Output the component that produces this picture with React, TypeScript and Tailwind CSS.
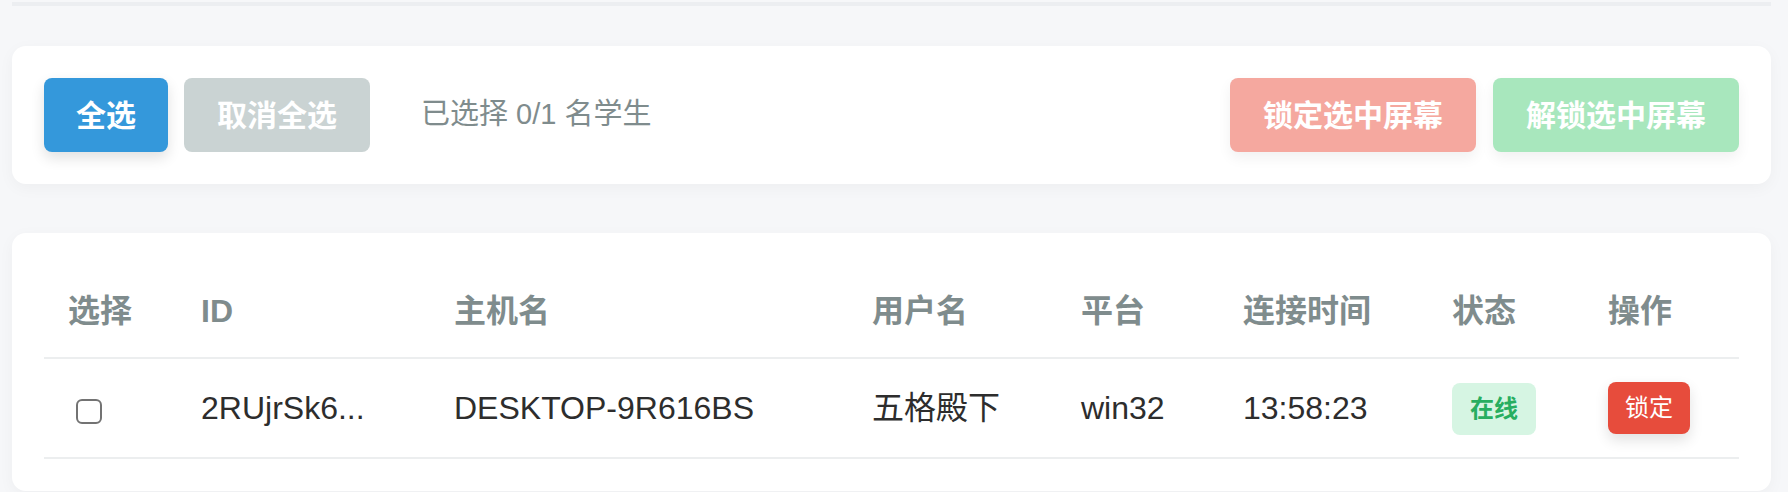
import React from "react";

const font = "font-['Liberation_Sans','Noto_Sans_CJK_SC',sans-serif]";

const columns = [
  { label: "选择", w: "w-[133px]" },
  { label: "ID", w: "w-[253px]" },
  { label: "主机名", w: "w-[418px]" },
  { label: "用户名", w: "w-[209px]" },
  { label: "平台", w: "w-[162px]" },
  { label: "连接时间", w: "w-[209px]" },
  { label: "状态", w: "w-[156px]" },
  { label: "操作", w: "w-[155px]" },
];

const students = [
  {
    id: "2RUjrSk6...",
    host: "DESKTOP-9R616BS",
    user: "五格殿下",
    platform: "win32",
    time: "13:58:23",
    online: true,
  },
];

export default function App() {
  return (
    <div className={`min-h-[492px] bg-[#f6f7f9] pl-[12px] pr-[17px] ${font}`}>
      <div className="pt-[2px]">
        <div className="h-[4px] bg-[#eceef1]" />
      </div>

      {/* toolbar */}
      <div className="mt-[40px] flex items-center rounded-[14px] bg-white p-[32px] shadow-[0_4px_16px_rgba(0,0,0,0.04)]">
        <button className="h-[74px] rounded-[8px] bg-[#3498db] px-[32px] text-[30px] font-bold text-white shadow-[0_6px_14px_rgba(0,0,0,0.12)]">
          全选
        </button>
        <button className="ml-[16px] h-[74px] rounded-[8px] bg-[#cad3d3] px-[33px] text-[30px] font-bold text-white">
          取消全选
        </button>
        <span className="ml-[51px] text-[29px] text-[#7f8c8d]">已选择 0/1 名学生</span>
        <div className="ml-auto flex gap-[17px]">
          <button className="h-[74px] w-[246px] rounded-[8px] bg-[#f5a89f] text-[30px] font-bold text-white shadow-[0_6px_14px_rgba(0,0,0,0.06)]">
            锁定选中屏幕
          </button>
          <button className="h-[74px] w-[246px] rounded-[8px] bg-[#a8e7bd] text-[30px] font-bold text-white shadow-[0_6px_14px_rgba(0,0,0,0.06)]">
            解锁选中屏幕
          </button>
        </div>
      </div>

      {/* student table */}
      <div className="mt-[49px] rounded-[14px] bg-white px-[32px] pb-[32px] pt-[32px] shadow-[0_4px_16px_rgba(0,0,0,0.04)]">
        <table className="w-full table-fixed border-collapse">
          <thead>
            <tr className="border-b-2 border-[#eceeef]">
              {columns.map((c) => (
                <th
                  key={c.label}
                  className={`${c.w} px-[24px] py-[22px] text-left text-[32px] font-bold leading-[48px] text-[#7f8c8d]`}
                >
                  {c.label}
                </th>
              ))}
            </tr>
          </thead>
          <tbody>
            {students.map((s) => (
              <tr key={s.id} className="border-b-2 border-[#eceeef] text-[32px] text-[#2d2d2d]">
                <td className="h-[100px] px-[24px] py-0 align-middle">
                  <input
                    type="checkbox"
                    className="ml-[8px] mt-[6px] block h-[25px] w-[26px] appearance-none rounded-[6px] border-2 border-[#737373] bg-white"
                  />
                </td>
                <td className="px-[24px]">{s.id}</td>
                <td className="px-[24px]">{s.host}</td>
                <td className="px-[24px]">{s.user}</td>
                <td className="px-[24px]">{s.platform}</td>
                <td className="px-[24px]">{s.time}</td>
                <td className="px-[24px]">
                  <span className="inline-flex h-[52px] w-[84px] items-center justify-center rounded-[8px] bg-[#d6f5e3] text-[24px] font-bold text-[#27ae60]">
                    在线
                  </span>
                </td>
                <td className="px-[24px]">
                  <button className="flex h-[52px] w-[82px] items-center justify-center rounded-[8px] bg-[#e74c3c] text-[24px] text-white shadow-[0_6px_14px_rgba(0,0,0,0.12)]">
                    锁定
                  </button>
                </td>
              </tr>
            ))}
          </tbody>
        </table>
      </div>
    </div>
  );
}
